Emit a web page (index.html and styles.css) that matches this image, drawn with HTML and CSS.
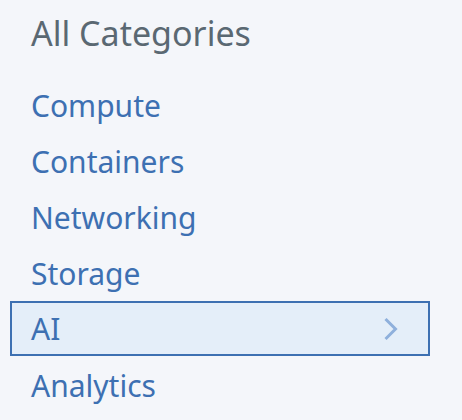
FILE: index.html
```html
<!DOCTYPE html>
<html>
<head>
<meta charset="utf-8">
<link rel="stylesheet" href="styles.css">
</head>
<body>
<nav class="categories">
  <h2 class="title">All Categories</h2>
  <ul class="list">
    <li class="item">Compute</li>
    <li class="item">Containers</li>
    <li class="item">Networking</li>
    <li class="item">Storage</li>
    <li class="item selected">AI
      <svg class="chevron" width="16" height="24" viewBox="0 0 16 24"><path d="M2.5 2 L12.5 12 L2.5 22" fill="none" stroke="#8fb0dc" stroke-width="3"/></svg>
    </li>
    <li class="item">Analytics</li>
  </ul>
</nav>
</body>
</html>
```
FILE: styles.css
```css
html, body {
  margin: 0;
  padding: 0;
  background: #f4f6fa;
  font-family: "Noto Sans", "Open Sans", sans-serif;
}
.categories {
  width: 420px;
  padding: 9px 0 0 10px;
}
.title {
  margin: 0;
  padding-left: 21px;
  font-size: 34px;
  font-weight: 400;
  line-height: 48px;
  color: #5a6872;
}
.list {
  list-style: none;
  margin: 20px 0 0 0;
  padding: 0;
}
.item {
  height: 56px;
  box-sizing: border-box;
  display: flex;
  align-items: center;
  justify-content: space-between;
  padding: 0 29px 0 19px;
  font-size: 30px;
  color: #3d70b2;
  border: 2px solid transparent;
}
.item.selected {
  height: 55px;
  margin-bottom: 1px;
  background: #e4eef9;
  border-color: #3d70b2;
}
```
